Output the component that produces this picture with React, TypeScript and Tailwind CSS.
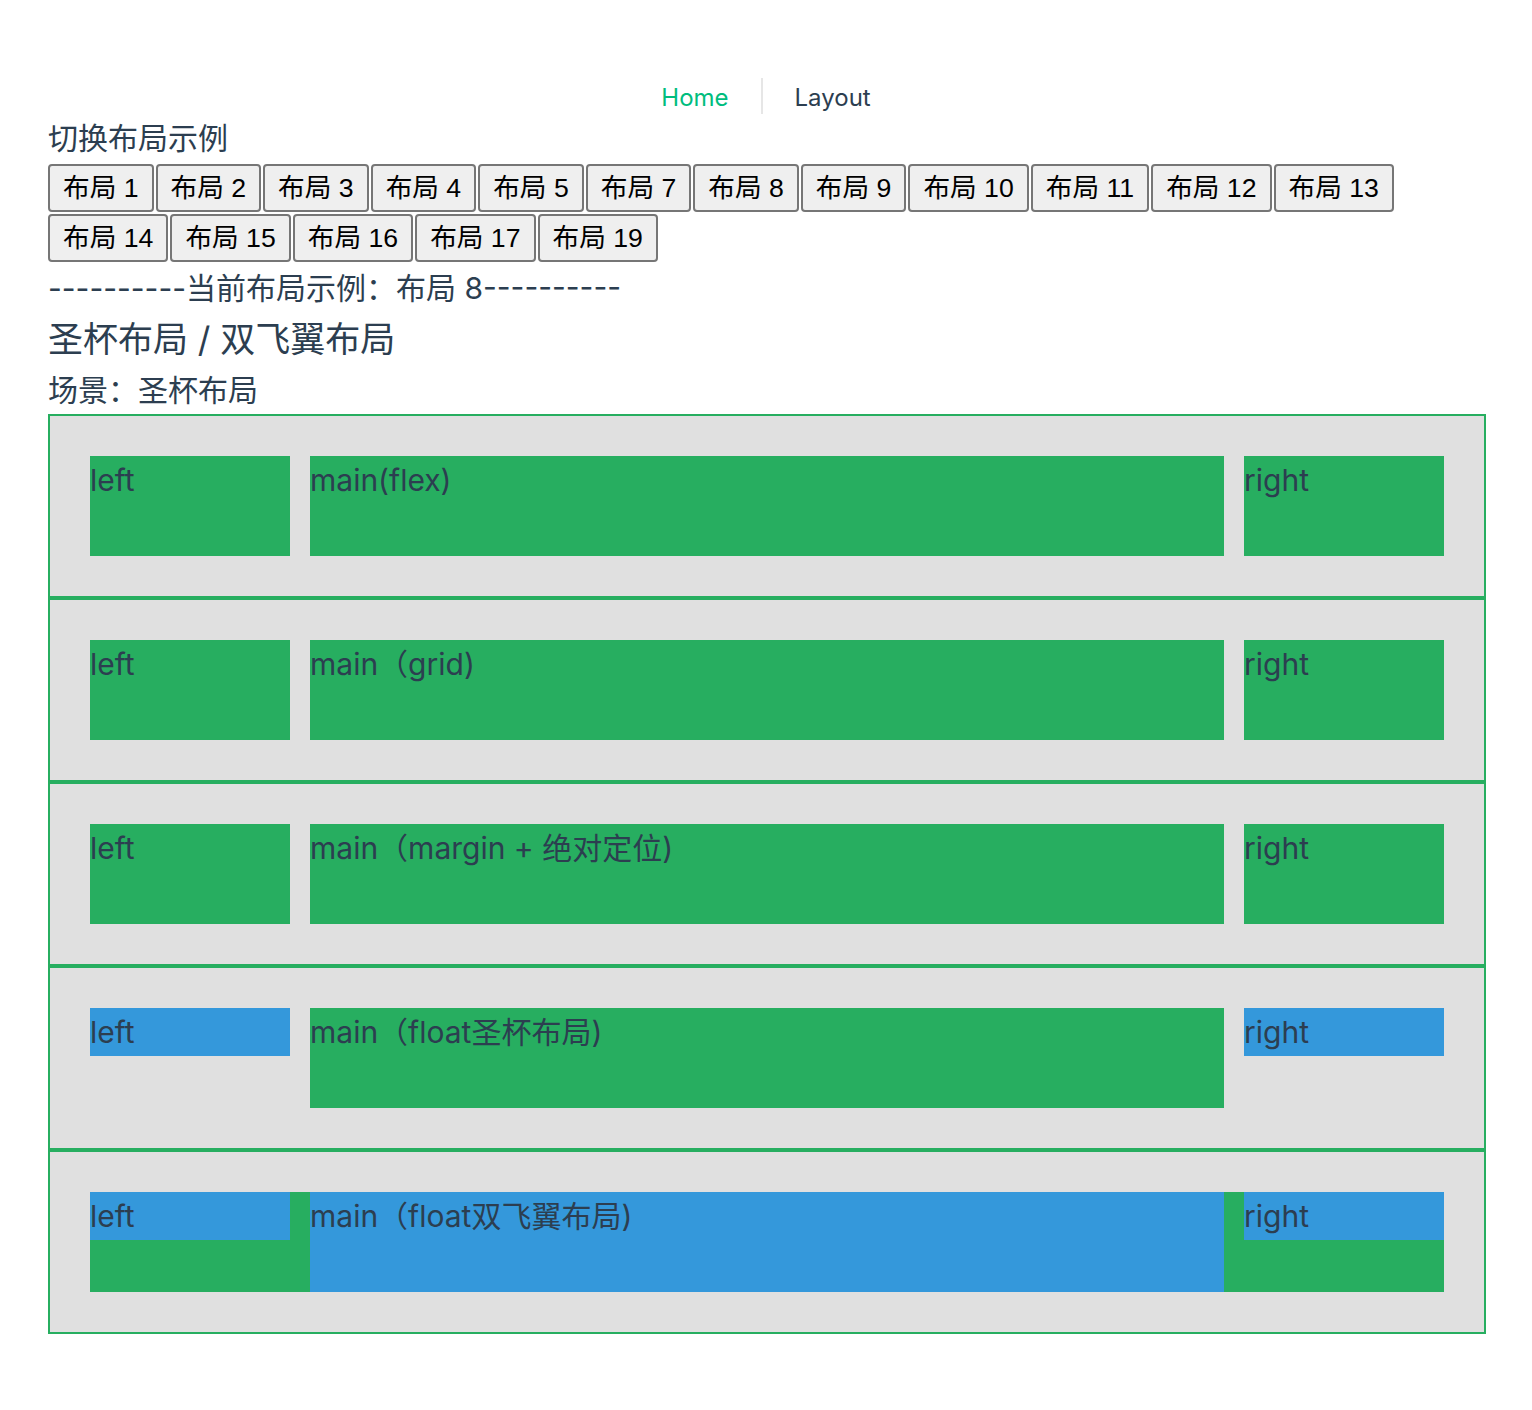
import React from 'react'

const buttons = [1, 2, 3, 4, 5, 7, 8, 9, 10, 11, 12, 13, 14, 15, 16, 17, 19]

const box = 'text-[#2c3e50] text-[30px] leading-[48px]'

function Section({ children }: { children: React.ReactNode }) {
  return (
    <div className="w-[1438px] border-2 border-[#27ae60] bg-[#e0e0e0] p-10">
      {children}
    </div>
  )
}

export default function App() {
  return (
    <div
      className="min-h-screen bg-white text-[#2c3e50] pb-[76px]"
      style={{ fontFamily: 'Inter, "Noto Sans CJK SC", sans-serif' }}
    >
      {/* nav */}
      <nav className="pt-[78px] flex justify-center items-center text-[24px]">
        <a className="px-8 h-[36px] pt-[3px] flex items-center text-[#00bd7e]">Home</a>
        <a className="px-8 h-[36px] pt-[3px] flex items-center border-l-2 border-[#e6e6e6]">Layout</a>
      </nav>

      <main className="ml-12">
        <p className="text-[30px] leading-[48px]">切换布局示例</p>

        <div className="flex flex-wrap gap-[2px] w-[1438px] mt-[2px]">
          {buttons.map((n) => (
            <button
              key={n}
              className="h-[48px] px-[13px] border-2 border-[#767676] rounded-[4px] bg-[#efefef] text-black text-[26.67px] leading-none"
              style={{ fontFamily: '"Liberation Sans", "Noto Sans CJK SC", sans-serif' }}
            >
              布局 {n}
            </button>
          ))}
        </div>

        <p className="text-[30px] leading-[48px] mt-[2px]">----------当前布局示例：布局 8----------</p>
        <h2 className="text-[35px] leading-[54px]">圣杯布局 / 双飞翼布局</h2>
        <p className="text-[30px] leading-[48px]">场景：圣杯布局</p>

        {/* flex */}
        <Section>
          <div className="flex gap-5 h-[100px]">
            <div className={`w-[200px] bg-[#27ae60] ${box}`}>left</div>
            <div className={`flex-1 bg-[#27ae60] ${box}`}>main(flex)</div>
            <div className={`w-[200px] bg-[#27ae60] ${box}`}>right</div>
          </div>
        </Section>

        {/* grid */}
        <Section>
          <div className="grid grid-cols-[200px_1fr_200px] gap-5 h-[100px]">
            <div className={`bg-[#27ae60] ${box}`}>left</div>
            <div className={`bg-[#27ae60] ${box}`}>main（grid)</div>
            <div className={`bg-[#27ae60] ${box}`}>right</div>
          </div>
        </Section>

        {/* margin + absolute */}
        <Section>
          <div className="flex gap-5 h-[100px]">
            <div className={`w-[200px] bg-[#27ae60] ${box}`}>left</div>
            <div className={`flex-1 bg-[#27ae60] ${box}`}>main（margin + 绝对定位)</div>
            <div className={`w-[200px] bg-[#27ae60] ${box}`}>right</div>
          </div>
        </Section>

        {/* float holy grail */}
        <Section>
          <div className="flex gap-5 h-[100px] items-start">
            <div className={`w-[200px] bg-[#3498db] ${box}`}>left</div>
            <div className={`flex-1 h-[100px] bg-[#27ae60] ${box}`}>main（float圣杯布局)</div>
            <div className={`w-[200px] bg-[#3498db] ${box}`}>right</div>
          </div>
        </Section>

        {/* float double wing */}
        <Section>
          <div className="flex gap-5 h-[100px] items-start bg-[#27ae60]">
            <div className={`w-[200px] bg-[#3498db] ${box}`}>left</div>
            <div className={`flex-1 h-[100px] bg-[#3498db] ${box}`}>main（float双飞翼布局)</div>
            <div className={`w-[200px] bg-[#3498db] ${box}`}>right</div>
          </div>
        </Section>
      </main>
    </div>
  )
}
